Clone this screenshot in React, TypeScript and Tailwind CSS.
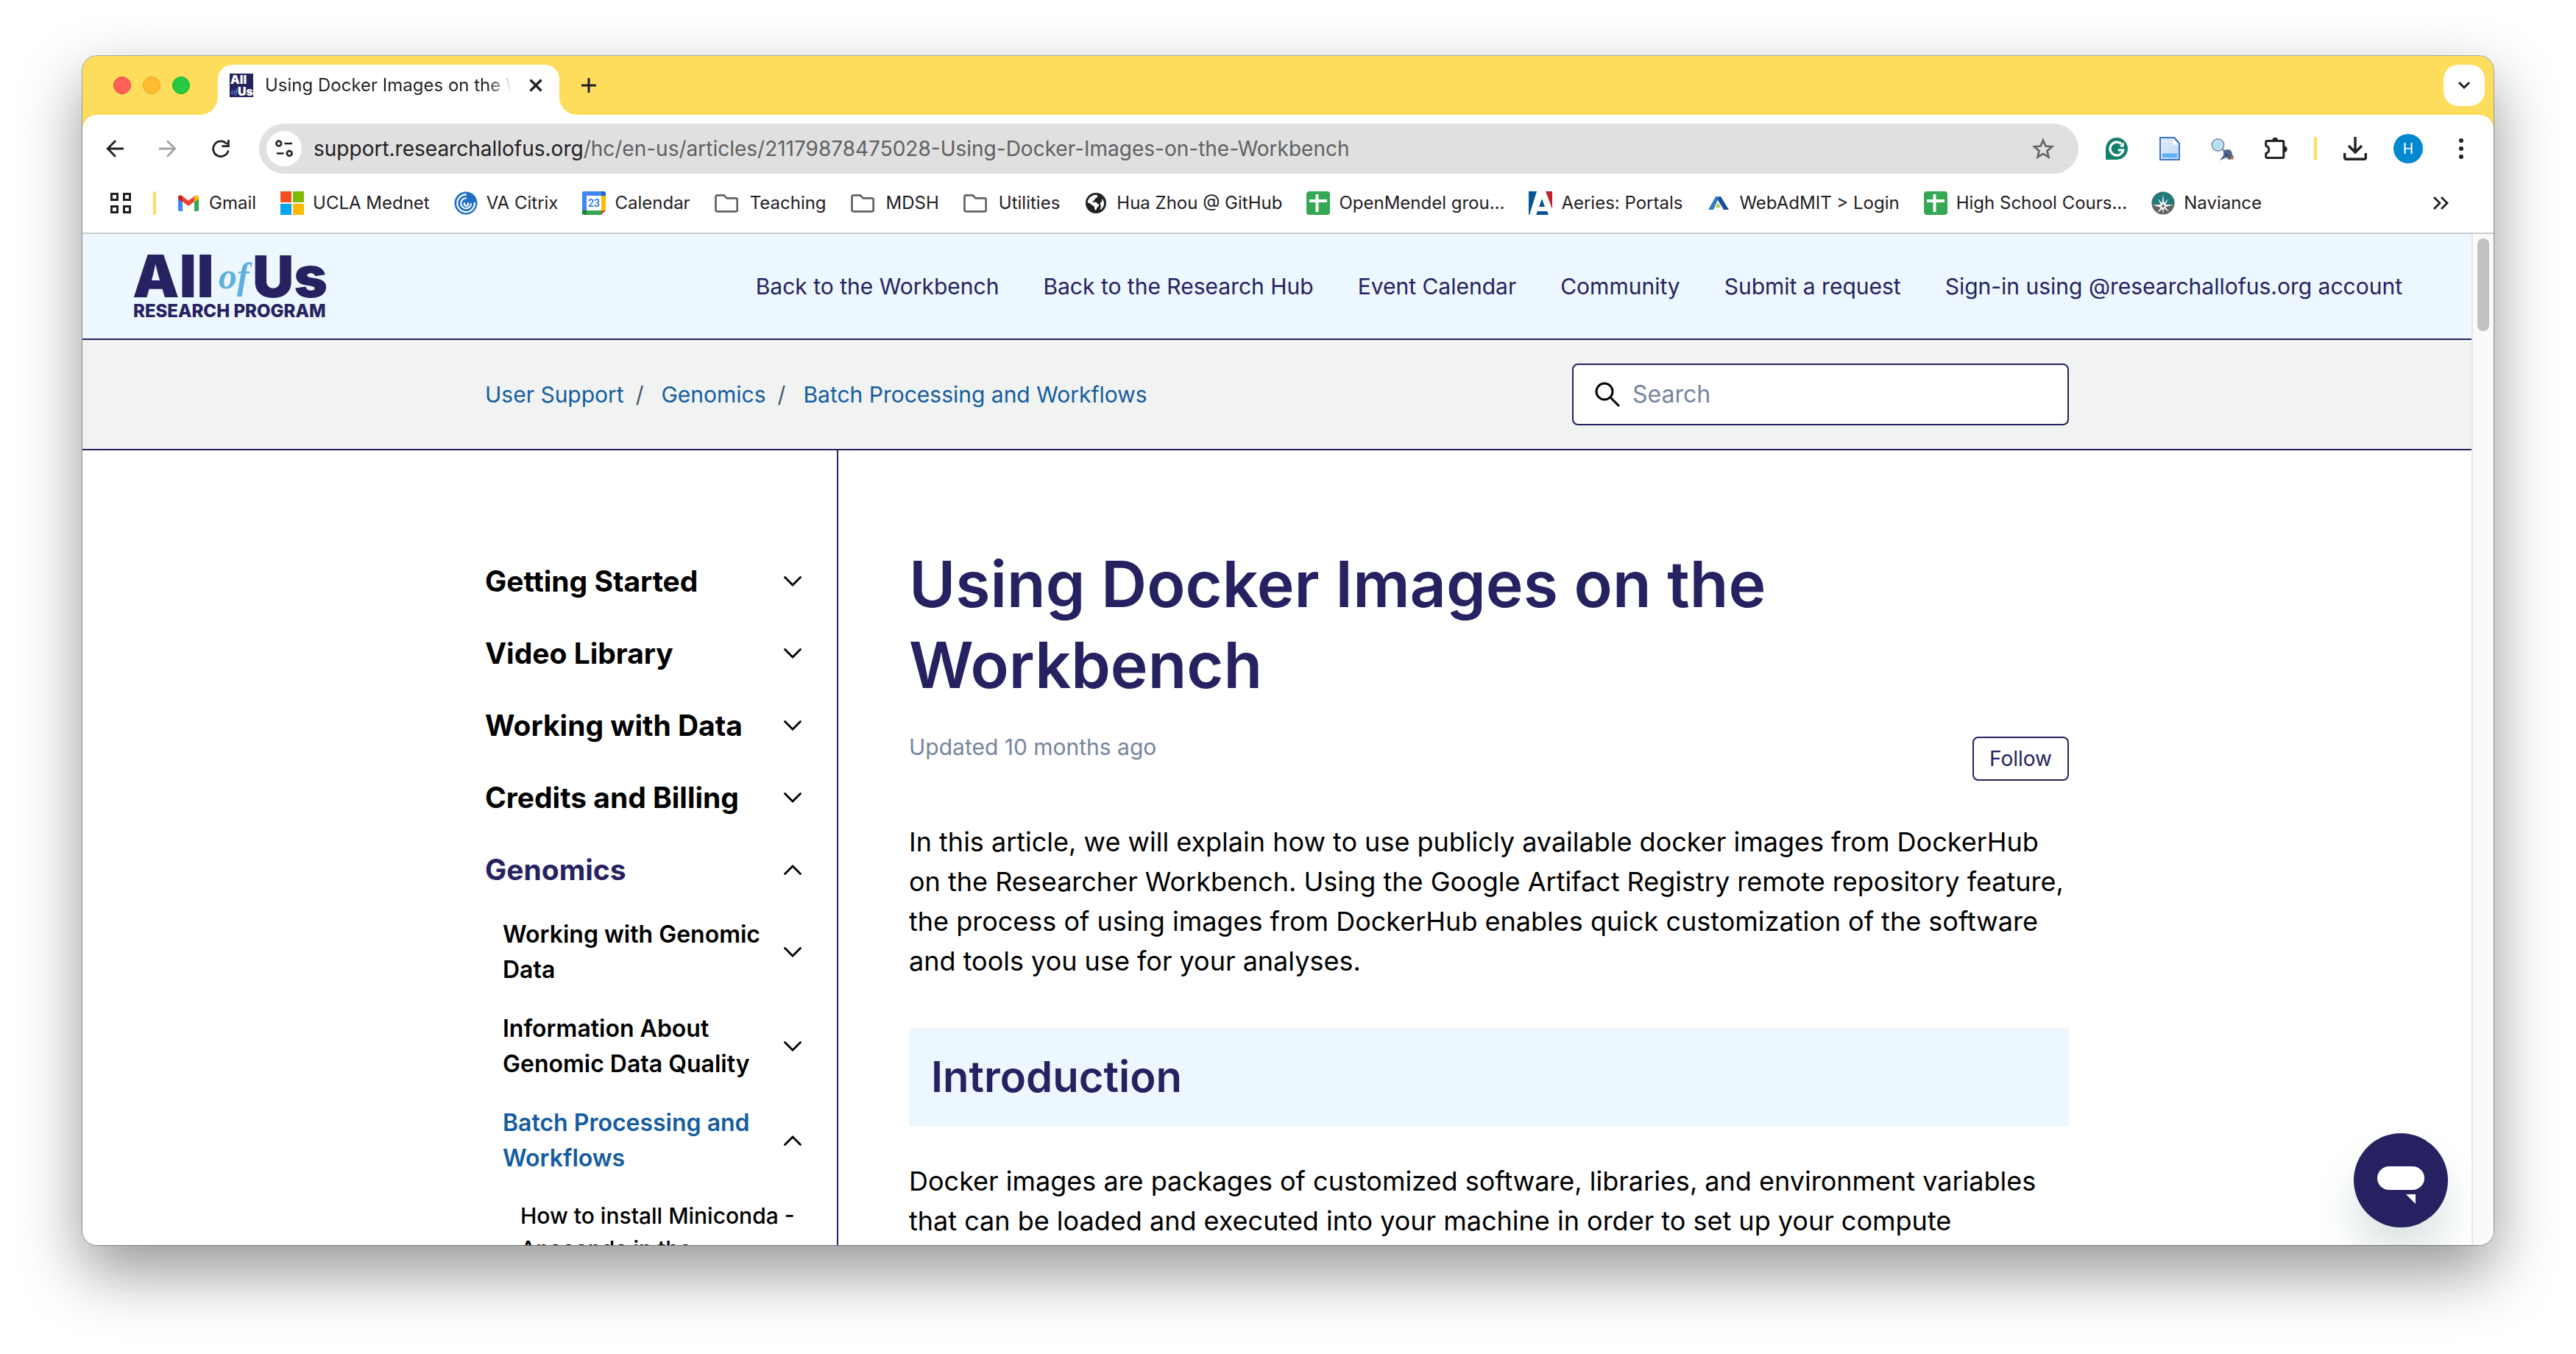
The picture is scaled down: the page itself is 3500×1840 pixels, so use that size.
import type { ReactNode } from "react";

/* ---------- browser toolbar icons ---------- */

const BackIcon = () => (
  <svg viewBox="0 0 24 24" className="size-6" fill="none" stroke="currentColor" strokeWidth="2.8">
    <path d="M24 12H2.5M13 1.2 2.2 12 13 22.8" />
  </svg>
);

const ForwardIcon = () => (
  <svg viewBox="0 0 24 24" className="size-6" fill="none" stroke="currentColor" strokeWidth="2.8">
    <path d="M0 12h21.5M11 1.2 21.8 12 11 22.8" />
  </svg>
);

const ReloadIcon = () => (
  <svg viewBox="0 0 24 24" className="size-6" fill="none" stroke="currentColor" strokeWidth="2.8">
    <path d="M22.2 14.5A10.4 10.4 0 1 1 20.4 6" />
    <path d="M22.4 0v8.6h-9" />
  </svg>
);

const SiteInfoIcon = () => (
  <svg viewBox="0 0 24 24" className="size-6" fill="none" stroke="currentColor" strokeWidth="2.6">
    <circle cx="4.8" cy="5" r="3.4" />
    <path d="M12.5 5H23M2 18.500h9.500" />
    <circle cx="19.200" cy="18.500" r="3.400" />
  </svg>
);

const StarIcon = () => (
  <svg viewBox="0 0 32 32" className="size-8" fill="none" stroke="#5f6368" strokeWidth="2.600">
    <path d="M16 4.500l3.400 8 8.700.8-6.600 5.700 2 8.500L16 23l-7.500 4.500 2-8.500L3.900 13.300l8.700-.8z" />
  </svg>
);

const GrammarlyIcon = () => (
  <svg viewBox="0 0 32 32" className="size-8">
    <path d="M16 1a15 15 0 1 1 0 30H1V16A15 15 0 0 1 16 1z" fill="#12806a" />
    <path d="M22.500 9.800a9 9 0 1 0 2.300 8.200h-7" fill="none" stroke="#fff" strokeWidth="3.200" />
    <path d="M25.700 7v6.500h-6z" fill="#fff" />
  </svg>
);

const DocIcon = () => (
  <svg viewBox="0 0 32 32" className="size-8">
    <defs>
      <linearGradient id="doc-paper" x1="0" y1="0" x2="1" y2="1">
        <stop offset="0" stopColor="#e4edfd" />
        <stop offset="1" stopColor="#bdd6f9" />
      </linearGradient>
    </defs>
    <path d="M3 1h19l7 8v22H3z" fill="url(#doc-paper)" stroke="#3f74c6" strokeWidth="2" />
    <path d="M21.500 2.500V9.500H28" fill="#fff" stroke="#fff" strokeWidth="2" />
    <path d="M22 1l7 8" stroke="#3f74c6" strokeWidth="2" />
    <rect x="6" y="22.500" width="20" height="5.500" fill="#5ab2f5" />
  </svg>
);

const DetectiveIcon = () => (
  <svg viewBox="0 0 32 32" className="size-8">
    <circle cx="9.500" cy="11" r="8" fill="#aee0f5" stroke="#8296ab" strokeWidth="2" />
    <circle cx="9.500" cy="11" r="6" fill="none" stroke="#dcecf5" strokeWidth="1.500" />
    <path d="M15 16l4 4" stroke="#8b95a5" strokeWidth="3" />
    <path d="M17 20c3-4 9-4 11 0l1 4 2 4-4 1-1 3-5-4-9 4 5-7z" fill="#54658a" />
    <path d="M27 26l4 1-1 4-3-1z" fill="#b4663f" />
    <path d="M19 23l5 2-3 2z" fill="#2f3b57" />
  </svg>
);

const PuzzleIcon = () => (
  <svg viewBox="0 0 32 32" className="size-8">
    <path
      d="M4.500 5.500h20.500a1.800 1.800 0 0 1 1.800 1.800V26.700a1.800 1.800 0 0 1-1.800 1.800H4.500a1.800 1.800 0 0 1-1.800-1.800V22.500a5.300 5.300 0 0 0 0-10.300V7.300a1.800 1.800 0 0 1 1.800-1.800z"
      fill="none"
      stroke="currentColor"
      strokeWidth="3"
      strokeLinejoin="round"
    />
    <path d="M11 5a4.200 4.200 0 0 1 8.400 0zM27.500 12.500a4.200 4.200 0 0 1 0 8.400z" fill="currentColor" />
  </svg>
);

const DownloadIcon = () => (
  <svg viewBox="0 0 32 32" className="size-8" fill="none" stroke="currentColor" strokeWidth="3.400">
    <path d="M16 0v20.500M7 12l9 9 9-9" />
    <path d="M1.700 22v6.500a1.800 1.800 0 0 0 1.800 1.800h25a1.800 1.800 0 0 0 1.800-1.800V22" />
  </svg>
);

/* ---------- bookmark icons ---------- */

const AppsIcon = () => (
  <svg viewBox="0 0 32 32" className="size-8" fill="none" stroke="currentColor" strokeWidth="3">
    <path d="M3.500 3.500h8v8h-8zM20.500 3.500h8v8h-8zM3.500 20.500h8v8h-8zM20.500 20.500h8v8h-8z" />
  </svg>
);

const GmailIcon = () => (
  <svg viewBox="0 0 32 32" className="size-8">
    <path d="M2 9.500l6 4.500v13H4a2 2 0 0 1-2-2z" fill="#4285f4" />
    <path d="M30 9.500L24 14v13h4a2 2 0 0 0 2-2z" fill="#34a853" />
    <path d="M8 14V6.800l8 6 8-6V14l-8 6z" fill="#ea4335" />
    <path d="M24 6.800l1.400-1C27.300 4.400 30 5.600 30 8v2.200L24 14.500z" fill="#fbbc04" />
    <path d="M8 6.800l-1.400-1C4.700 4.400 2 5.600 2 8v2.200l6 4.300z" fill="#c5221f" />
  </svg>
);

const MicrosoftIcon = () => (
  <svg viewBox="0 0 32 32" className="size-8">
    <path fill="#f25022" d="M0 0h15v15H0z" />
    <path fill="#7fba00" d="M17 0h15v15H17z" />
    <path fill="#00a4ef" d="M0 17h15v15H0z" />
    <path fill="#ffb900" d="M17 17h15v15H17z" />
  </svg>
);

const CitrixIcon = () => (
  <svg viewBox="0 0 32 32" className="size-8">
    <circle cx="16" cy="16" r="15.500" fill="#1f6fc5" />
    <g fill="none" stroke="#fff" strokeWidth="2.200">
      <path d="M17 4.500A11.800 11.800 0 1 0 27.800 15" />
      <path d="M17 9.300a7 7 0 1 0 6.200 7" />
      <path d="M14.500 15.500a2.600 2.600 0 1 0 4 0" />
    </g>
  </svg>
);

const CalendarIcon = () => (
  <svg viewBox="0 0 32 32" className="size-8">
    <path d="M2.500 0H26v6H6v20H0V2.500A2.500 2.500 0 0 1 2.500 0z" fill="#4285f4" />
    <path d="M26 0h3.500A2.500 2.500 0 0 1 32 2.500V6h-6z" fill="#1967d2" />
    <path d="M26 6h6v20h-6z" fill="#fbbc04" />
    <path d="M6 26h20v6H6z" fill="#34a853" />
    <path d="M0 26h6v6H2.500A2.500 2.500 0 0 1 0 29.500z" fill="#188038" />
    <path d="M26 26h6l-6 6z" fill="#ea4335" />
    <path d="M6 6h20v20H6z" fill="#fff" />
    <text x="16" y="21" textAnchor="middle" fontSize="14" fontFamily="Roboto" fontWeight="500" fill="#1a73e8">
      23
    </text>
  </svg>
);

const FolderIcon = () => (
  <svg viewBox="0 0 32 32" className="mr-1 size-8" fill="none" stroke="#636466" strokeWidth="2.800">
    <path d="M3.500 5.400h9.200l4 4h12a2 2 0 0 1 2 2v14a2 2 0 0 1-2 2H3.500a2 2 0 0 1-2-2v-18a2 2 0 0 1 2-2z" />
  </svg>
);

const GlobeIcon = () => (
  <svg viewBox="0 0 32 32" className="size-8">
    <circle cx="16" cy="16" r="14" fill="#202124" />
    <path d="M4.800 15.500C5 9.500 10 5 16 4.800c2.200.2 2.800 1.700 2 3.200-.6 1-2.200 1-3 1.500-.8.700.2 2-.8 2.700-1 .6-2.200 0-2.700 1-.4 1.200 1.600 1.500 3.500 1.500 2.500 0 2.500 2 4 2.600 1 .4 1.500 1 1.200 2.200-.5 1.500-2.700 1.700-3 3.500-.2 1.400-.7 2.700-2 2.500-1.500-.300-1.200-2.500-1.500-4-.4-1.700-2.700-2-4-3.500-1-1.200-3-2.500-4.900-2.500z" fill="#fff" />
    <path d="M5 17.500c3 0 8 2 9 4 .5 1.300 0 3.300.5 5.500C9.500 26.500 5.500 22.500 5 17.500z" fill="#202124" />
    <path d="M24.500 10c2 2.500 2.800 5 2.500 7.500-.500 3.500-2.500 6-5 7.700-.500-2 .8-3.200.8-4.700 0-1.800-1.300-2.500-1-4.200.2-1.500 2.200-1.800 2.500-3.300.2-1.200-.7-1.800.2-3z" fill="#fff" />
  </svg>
);

const SheetIcon = () => (
  <svg viewBox="0 0 32 32" className="size-8">
    <rect width="32" height="32" rx="4" fill="#34a853" />
    <path d="M4 11h24v4H4zM12.500 4h4v24h-4z" fill="#fff" />
  </svg>
);

const AeriesIcon = () => (
  <svg viewBox="0 0 32 32" className="size-8">
    <path fill="#0a5296" d="M0 0h32v32H0z" />
    <path fill="#c4202b" d="M22 0h10v32h-2z" />
    <path fill="#fff" d="M11 0h12l9 24v8h-5l-2-5H12l-2 5H1z" />
    <path fill="#0a5296" d="M18 10l4 11h-8zM12 28h13l1 4H11z" />
  </svg>
);

const WebAdmitIcon = () => (
  <svg viewBox="0 0 32 32" className="size-8">
    <path fill="#1b4f9e" d="M12 7h7l11 18h-7z" />
    <path fill="#2f7cc4" d="M12 7h5L9 25H2z" />
    <path fill="#b5cf3a" d="M15 15l4 7h-7z" />
  </svg>
);

const NavianceIcon = () => (
  <svg viewBox="0 0 32 32" className="size-8">
    <circle cx="16" cy="16" r="15.500" fill="#636466" />
    <path d="M.5 16.500a15.500 15.500 0 0 1 31 0L16 19z" fill="#217a78" />
    <path
      d="M16 4l1.300 12 6-6-4.300 8 11 .5-11 2.500 5 7-7-5L16 31l-1-7-7 5 5-7-11-3.500 11-.5-4.300-8 6 6z"
      fill="#fff"
    />
    <circle cx="16" cy="20" r="2" fill="#636466" />
  </svg>
);

/* ---------- page data ---------- */

const bookmarks: { label: string; icon: ReactNode }[] = [
  { label: "Gmail", icon: <GmailIcon /> },
  { label: "UCLA Mednet", icon: <MicrosoftIcon /> },
  { label: "VA Citrix", icon: <CitrixIcon /> },
  { label: "Calendar", icon: <CalendarIcon /> },
  { label: "Teaching", icon: <FolderIcon /> },
  { label: "MDSH", icon: <FolderIcon /> },
  { label: "Utilities", icon: <FolderIcon /> },
  { label: "Hua Zhou @ GitHub", icon: <GlobeIcon /> },
  { label: "OpenMendel grou...", icon: <SheetIcon /> },
  { label: "Aeries: Portals", icon: <AeriesIcon /> },
  { label: "WebAdMIT > Login", icon: <WebAdmitIcon /> },
  { label: "High School Cours...", icon: <SheetIcon /> },
  { label: "Naviance", icon: <NavianceIcon /> },
];

const navLinks = [
  "Back to the Workbench",
  "Back to the Research Hub",
  "Event Calendar",
  "Community",
  "Submit a request",
  "Sign-in using @researchallofus.org account",
];

const crumbs = ["User Support", "Genomics", "Batch Processing and Workflows"];

const sections = ["Getting Started", "Video Library", "Working with Data", "Credits and Billing", "Genomics"];

const topics = ["Working with Genomic Data", "Information About Genomic Data Quality", "Batch Processing and Workflows"];

/* ---------- pieces ---------- */

function Chevron({ up = false }: { up?: boolean }) {
  return (
    <svg viewBox="0 0 24 14" className="h-3.5 w-6 shrink-0" fill="none" stroke="#000" strokeWidth="2.800" strokeLinecap="round">
      <path d={up ? "M1.500 12.500 12 2l10.500 10.500" : "M1.500 1.500 12 12 22.500 1.500"} />
    </svg>
  );
}

function TabStrip() {
  return (
    <div className="flex h-20 items-center pl-[42px] pr-3">
      <div className="flex gap-4">
        <button aria-label="Close window" className="size-6 rounded-full border border-[#e24b41] bg-[#ff5f57]" />
        <button aria-label="Minimize window" className="size-6 rounded-full border border-[#e1a32a] bg-[#febc2e]" />
        <button aria-label="Zoom window" className="size-6 rounded-full border border-[#1dad2b] bg-[#28c840]" />
      </div>
      <div className="relative ml-[38px] flex h-[68px] w-[464px] items-center self-end rounded-t-[20px] bg-white pb-3 pl-4 pr-5">
        <svg viewBox="0 0 24 24" className="absolute -left-6 bottom-0 size-6" fill="#fff">
          <path d="M24 0v24H0A24 24 0 0 0 24 0z" />
        </svg>
        <svg viewBox="0 0 24 24" className="absolute -right-6 bottom-0 size-6" fill="#fff">
          <path d="M0 0v24h24A24 24 0 0 1 0 0z" />
        </svg>
        <svg viewBox="0 0 32 32" className="size-8 shrink-0" fontFamily="Inter" fontWeight="900" fill="#fff">
          <rect width="32" height="32" fill="#262261" />
          <text x="1" y="14" fontSize="16">All</text>
          <text x="11" y="30" fontSize="16">Us</text>
          <text x="2" y="28" fontSize="11" fontFamily="Liberation Serif" fontWeight="400" fontStyle="italic" fill="#5fafe0">of</text>
        </svg>
        <span className="ml-4 flex-1 overflow-hidden whitespace-nowrap text-2xl text-[#1f2023] [mask-image:linear-gradient(to_right,#000_90%,transparent)]">
          Using Docker Images on the Workbench – User Support
        </span>
        <button aria-label="Close tab" className="ml-5">
          <svg viewBox="0 0 24 24" className="size-6" stroke="#202124" strokeWidth="3.200">
            <path d="M4.500 4.500l15 15M19.500 4.500l-15 15" />
          </svg>
        </button>
      </div>
      <button aria-label="New tab" className="ml-7">
        <svg viewBox="0 0 24 24" className="size-6" stroke="#202124" strokeWidth="3">
          <path d="M2 12h20M12 2v20" />
        </svg>
      </button>
      <button aria-label="Search tabs" className="ml-auto flex size-14 items-center justify-center rounded-[20px] bg-white">
        <svg viewBox="0 0 20 20" className="size-5" fill="none" stroke="#202124" strokeWidth="3">
          <path d="M3 6l7 7 7-7" />
        </svg>
      </button>
    </div>
  );
}

function Toolbar() {
  return (
    <div className="flex h-[92px] items-center pl-8 pr-7 text-[#202124]">
      <button aria-label="Back"><BackIcon /></button>
      <button aria-label="Forward" className="ml-12 text-[#a3a4a5]"><ForwardIcon /></button>
      <button aria-label="Reload" className="ml-12"><ReloadIcon /></button>
      <div className="ml-10 flex h-[68px] flex-1 items-center rounded-full bg-[#e0e0e0] pl-2.5 pr-8">
        <button aria-label="View site information" className="flex size-12 items-center justify-center rounded-full bg-white">
          <SiteInfoIcon />
        </button>
        <div role="textbox" aria-label="Address" className="ml-4 flex-1 whitespace-nowrap text-[28px] leading-9 text-[#5f6063]">
          <span className="text-[#1f2023]">support.researchallofus.org</span>
          /hc/en-us/articles/21179878475028-Using-Docker-Images-on-the-Workbench
        </div>
        <button aria-label="Bookmark this tab"><StarIcon /></button>
      </div>
      <div className="ml-9 flex items-center gap-10">
        <button aria-label="Grammarly"><GrammarlyIcon /></button>
        <button aria-label="Documents"><DocIcon /></button>
        <button aria-label="Inspector"><DetectiveIcon /></button>
        <button aria-label="Extensions"><PuzzleIcon /></button>
      </div>
      <div className="ml-9 flex items-center gap-9">
        <span className="h-8 w-1 rounded-full bg-[#ffdd5c]" />
        <button aria-label="Downloads"><DownloadIcon /></button>
        <button aria-label="Profile" className="flex size-10 items-center justify-center rounded-full bg-[#0288d1] font-['Roboto'] text-xl text-white">
          H
        </button>
        <button aria-label="Browser menu">
          <svg viewBox="0 0 32 32" className="size-8" fill="#202124">
            <circle cx="16" cy="5" r="3" />
            <circle cx="16" cy="16" r="3" />
            <circle cx="16" cy="27" r="3" />
          </svg>
        </button>
      </div>
    </div>
  );
}

function BookmarkBar() {
  return (
    <div className="flex h-14 items-center pl-9 pr-14 text-2xl text-[#1f2023]">
      <button aria-label="Apps"><AppsIcon /></button>
      <span className="mx-7 h-8 w-1 rounded-full bg-[#ffdd5c]" />
      <div className="flex items-center gap-[33px] whitespace-nowrap">
        {bookmarks.map((b) => (
          <a key={b.label} href="#" className="flex items-center gap-3">
            {b.icon}
            {b.label}
          </a>
        ))}
      </div>
      <button aria-label="More bookmarks" className="ml-auto">
        <svg viewBox="0 0 32 32" className="size-8" fill="none" stroke="#202124" strokeWidth="2.800">
          <path d="M7 8l8 8-8 8M17 8l8 8-8 8" />
        </svg>
      </button>
    </div>
  );
}

function Logo() {
  return (
    <svg viewBox="0 0 264 88" className="h-[88px] w-[264px] overflow-visible" fontFamily="Inter" fill="#262261">
      <text x="-2" y="59" fontSize="80" fontWeight="900">All</text>
      <text x="161" y="59" fontSize="78" fontWeight="900">Us</text>
      <text x="115" y="47" fontSize="50" fontFamily="Liberation Serif" fontWeight="700" fontStyle="italic" fill="#5fafe0">of</text>
      <text x="-1" y="86" fontSize="24" fontWeight="800">RESEARCH PROGRAM</text>
    </svg>
  );
}

function SiteHeader() {
  return (
    <header className="flex h-36 items-center justify-between border-b-2 border-[#262261] bg-[#ecf7ff] pl-[70px] pr-[94px]">
      <a href="#" aria-label="All of Us Research Program"><Logo /></a>
      <nav className="flex gap-[60px] text-[30px] text-[#262261]">
        {navLinks.map((l) => (
          <a key={l} href="#">{l}</a>
        ))}
      </nav>
    </header>
  );
}

function SubHeader() {
  return (
    <div className="border-b-2 border-[#262261] bg-[#f0f3f2]">
      <div className="mx-auto flex h-[148px] max-w-[2152px] items-center justify-between">
        <nav aria-label="Breadcrumb">
          <ol className="flex text-[30px] text-[#145ca0]">
            {crumbs.map((c, i) => (
              <li key={c}>
                {i > 0 && <span className="ml-4 mr-6 text-[#4b5568]">/</span>}
                <a href="#">{c}</a>
              </li>
            ))}
          </ol>
        </nav>
        <label className="flex h-[84px] w-[675px] items-center rounded-lg border-2 border-[#262261] bg-white pl-7">
          <svg viewBox="0 0 36 36" className="size-9" fill="none" stroke="#000" strokeWidth="3" strokeLinecap="round">
            <circle cx="14" cy="14" r="11" />
            <path d="M22 22l11 11" />
          </svg>
          <span className="sr-only">Search</span>
          <input type="search" placeholder="Search" className="ml-4 min-w-0 flex-1 text-[32px] outline-none placeholder:text-[#75859d]" />
        </label>
      </div>
    </div>
  );
}

function Sidebar() {
  return (
    <aside className="w-[480px] shrink-0 border-r-2 border-[#262261] pr-12 pt-[148px]">
      <ul className="flex flex-col gap-[38px]">
        {sections.map((s) => (
          <li key={s}>
            <button className={`flex w-full items-center justify-between text-left text-[39px] font-bold leading-[60px] ${s === "Genomics" ? "text-[#262261]" : "text-black"}`}>
              {s}
              <Chevron up={s === "Genomics"} />
            </button>
          </li>
        ))}
      </ul>
      <ul className="mt-[34px] flex flex-col gap-8 pl-6">
        {topics.map((t, i) => (
          <li key={t}>
            <button className={`flex w-full items-center justify-between text-left text-[32px] font-semibold leading-[48px] ${i === 2 ? "text-[#145ca0]" : "text-black"}`}>
              <span className="max-w-[356px]">{t}</span>
              <Chevron up={i === 2} />
            </button>
          </li>
        ))}
      </ul>
      <a href="#" className="mt-8 block pl-12 text-[30px] font-medium leading-[45px] text-black">
        How to install Miniconda - Anaconda in the
      </a>
    </aside>
  );
}

function Article() {
  return (
    <article className="flex-1 pl-24 pt-[127px] text-black">
      <h1 className="text-[86px] font-semibold leading-[110px] text-[#262261]">Using Docker Images on the Workbench</h1>
      <div className="mt-8 flex items-start justify-between">
        <p className="text-[30px] leading-[48px] text-[#75859d]">Updated 10 months ago</p>
        <button className="mt-2.5 h-[60px] rounded-lg border-2 border-[#262261] px-[21px] text-[28px] text-[#262261]">Follow</button>
      </div>
      <p className="mt-14 text-4xl leading-[54px]">
        In this article, we will explain how to use publicly available docker images from DockerHub on the Researcher
        Workbench. Using the Google Artifact Registry remote repository feature, the process of using images from
        DockerHub enables quick customization of the software and tools you use for your analyses.
      </p>
      <h2 className="mt-16 bg-[#ecf7ff] px-[30px] py-8 text-[58px] font-semibold leading-[69px] text-[#262261]">Introduction</h2>
      <p className="mt-12 text-4xl leading-[54px]">
        Docker images are packages of customized software, libraries, and environment variables that can be loaded and
        executed into your machine in order to set up your compute
      </p>
    </article>
  );
}

export default function App() {
  return (
    <div className="h-screen bg-white px-28 pb-[148px] pt-[76px] font-['Inter',sans-serif]">
      <div className="flex h-full flex-col overflow-hidden rounded-[20px] bg-[#ffdd5c] shadow-[0_0_0_1px_rgba(0,0,0,0.3),0_36px_86px_rgba(0,0,0,0.42)]">
        <TabStrip />
        <div className="rounded-t-[20px] border-b-2 border-[#c9cdd1] bg-white pb-3">
          <Toolbar />
          <BookmarkBar />
        </div>
        <div className="flex min-h-0 flex-1 bg-white">
          <div className="relative flex min-w-0 flex-1 flex-col overflow-hidden">
            <SiteHeader />
            <SubHeader />
            <main className="mx-auto flex min-h-0 w-full max-w-[2152px] flex-1">
              <Sidebar />
              <Article />
            </main>
            <button
              aria-label="Open messaging window"
              className="absolute bottom-6 right-8 flex size-32 items-center justify-center rounded-full bg-[#262261] shadow-[0_40px_56px_rgba(23,73,77,0.15)]"
            >
              <svg viewBox="0 0 64 64" className="size-16" fill="#fff">
                <rect y="13" width="64" height="32" rx="16" />
                <path d="M39 51h13v13z" />
              </svg>
            </button>
          </div>
          <div className="w-[30px] border-l-2 border-[#e6e6e6] bg-[#fafafa] pl-1.5 pt-1.5">
            <div className="h-[126px] w-4 rounded-full bg-[#c1c1c1]" />
          </div>
        </div>
      </div>
    </div>
  );
}
